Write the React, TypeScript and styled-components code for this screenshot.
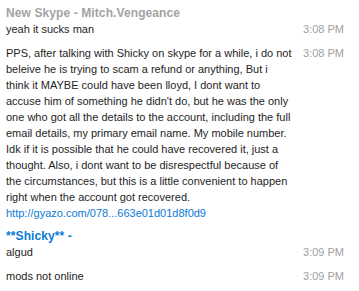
import React from 'react';
import styled, { createGlobalStyle } from 'styled-components';

type Message = {
  lines: string[];
  time: string;
  link?: string;
};

type Group = {
  author: string;
  own?: boolean;
  messages: Message[];
};

const GROUPS: Group[] = [
  {
    author: 'New Skype - Mitch.Vengeance',
    messages: [
      { lines: ['yeah it sucks man'], time: '3:08 PM' },
      {
        lines: [
          'PPS, after talking with Shicky on skype for a while, i do not',
          'beleive he is trying to scam a refund or anything, But i',
          'think it MAYBE could have been lloyd, I dont want to',
          "accuse him of something he didn't do, but he was the only",
          'one who got all the details to the account, including the full',
          'email details, my primary email name. My mobile number.',
          'Idk if it is possible that he could have recovered it, just a',
          'thought. Also, i dont want to be disrespectful because of',
          'the circumstances, but this is a little convenient to happen',
          'right when the account got recovered.',
        ],
        link: 'http://gyazo.com/078...663e01d01d8f0d9',
        time: '3:08 PM',
      },
    ],
  },
  {
    author: '**Shicky** -',
    own: true,
    messages: [
      { lines: ['algud'], time: '3:09 PM' },
      { lines: ['mods not online'], time: '3:09 PM' },
    ],
  },
];

const App = () => {
  return (
    <>
      <GlobalStyle />
      <ChatLog>
        {GROUPS.map((group, gi) => (
          <GroupBlock key={gi}>
            <Author $own={group.own}>{group.author}</Author>
            <MessageList>
              {group.messages.map((msg, mi) => (
                <MessageRow key={mi}>
                  <Body>
                    {msg.lines.map((line, li) => (
                      <Line key={li}>{line}</Line>
                    ))}
                    {msg.link && <Link href="#">{msg.link}</Link>}
                  </Body>
                  <Time>{msg.time}</Time>
                </MessageRow>
              ))}
            </MessageList>
          </GroupBlock>
        ))}
      </ChatLog>
    </>
  );
};

export default App;

const GlobalStyle = createGlobalStyle`
  html, body {
    margin: 0;
    padding: 0;
    background: #fff;
  }
`;

const ChatLog = styled.div`
  width: 359px;
  height: 291px;
  overflow: hidden;
  box-sizing: border-box;
  padding: 6px 15px 0 6px;
  display: flex;
  flex-direction: column;
  gap: 8px;
  font-family: 'Liberation Sans', Arial, sans-serif;
  font-size: 11px;
  line-height: 16px;
  color: #1e1e1e;
`;

const GroupBlock = styled.div`
  display: flex;
  flex-direction: column;
`;

const Author = styled.div<{ $own?: boolean }>`
  font-weight: bold;
  font-size: 12px;
  letter-spacing: 0.1px;
  line-height: 15px;
  color: ${(p) => (p.$own ? '#0a7ad6' : '#a3a3a3')};
`;

const MessageList = styled.div`
  display: flex;
  flex-direction: column;
  gap: 8px;
`;

const MessageRow = styled.div`
  display: flex;
  align-items: flex-start;
  justify-content: space-between;
`;

const Body = styled.div`
  display: flex;
  flex-direction: column;
  white-space: nowrap;
`;

const Line = styled.span``;

const Link = styled.a`
  color: #0a7ad6;
  text-decoration: none;
`;

const Time = styled.span`
  color: #a0a0a0;
  white-space: nowrap;
`;
